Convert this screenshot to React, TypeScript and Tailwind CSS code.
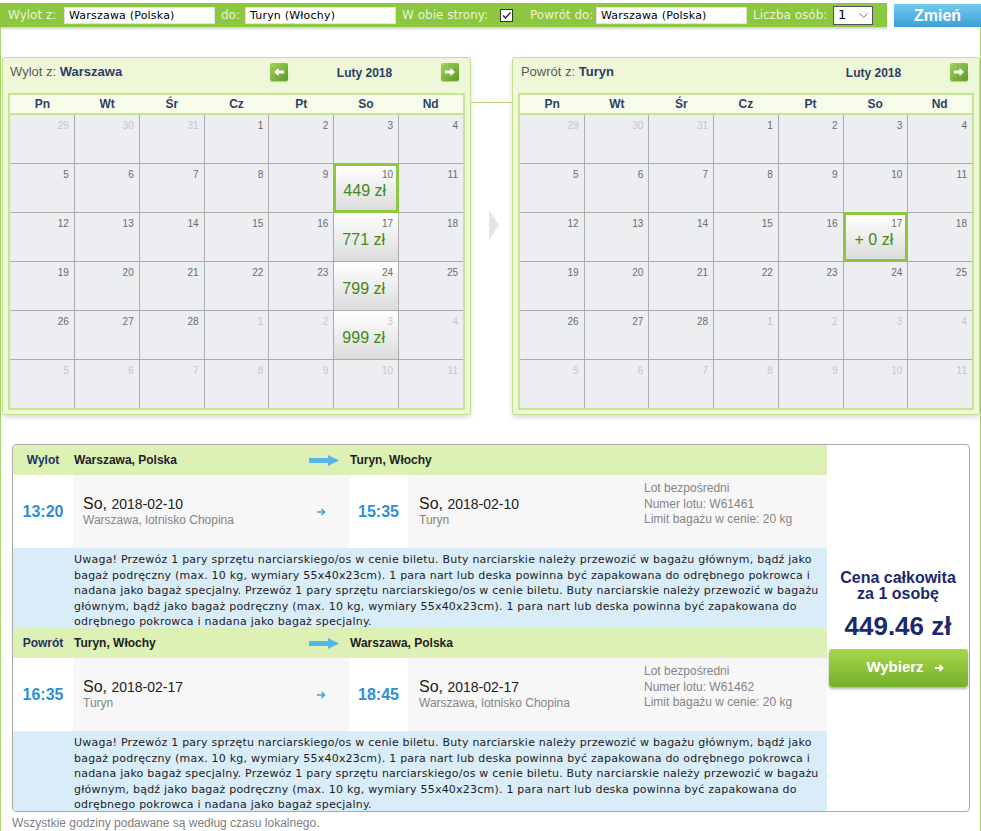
import React from 'react';

type Cell = { d: number; muted?: boolean; price?: string; selected?: boolean };

const DAYS = [ 'Pn', 'Wt', 'Śr', 'Cz', 'Pt', 'So', 'Nd' ];

const NOTE = [
	'Uwaga! Przewóz 1 pary sprzętu narciarskiego/os w cenie biletu. Buty narciarskie należy przewozić w bagażu głównym, bądź jako',
	'bagaż podręczny (max. 10 kg, wymiary 55x40x23cm). 1 para nart lub deska powinna być zapakowana do odrębnego pokrowca i',
	'nadana jako bagaż specjalny. Przewóz 1 pary sprzętu narciarskiego/os w cenie biletu. Buty narciarskie należy przewozić w bagażu',
	'głównym, bądź jako bagaż podręczny (max. 10 kg, wymiary 55x40x23cm). 1 para nart lub deska powinna być zapakowana do',
	'odrębnego pokrowca i nadana jako bagaż specjalny.',
];

// luty 2018: 3 dni ze stycznia, 28 dni, 11 z marca
function buildMonth( prices: Record< number, string >, selected: number ): Cell[] {
	const cells: Cell[] = [];
	[ 29, 30, 31 ].forEach( ( d ) => cells.push( { d, muted: true } ) );
	for ( let d = 1; d <= 28; d++ ) cells.push( { d } );
	for ( let d = 1; d <= 11; d++ ) cells.push( { d, muted: true } );
	return cells.map( ( c, i ) => ( { ...c, price: prices[ i ], selected: i === selected } ) );
}

const leftCells = buildMonth( { 12: '449 zł', 19: '771 zł', 26: '799 zł', 33: '999 zł' }, 12 );
const rightCells = buildMonth( { 19: '+ 0 zł' }, 19 );

function NavButton( { dir }: { dir: 'left' | 'right' } ) {
	return (
		<div className="flex h-[18px] w-[18px] items-center justify-center rounded-[2px] bg-linear-to-br from-[#a4d35a] to-[#5b9a26] shadow-[0_1px_1px_rgba(0,0,0,0.2)]">
			<svg width="10" height="8" viewBox="0 0 10 8">
				<path
					d={
						dir === 'left'
							? 'M0 4 L4.5 0 L4.5 2.5 L10 2.5 L10 5.5 L4.5 5.5 L4.5 8 Z'
							: 'M10 4 L5.5 0 L5.5 2.5 L0 2.5 L0 5.5 L5.5 5.5 L5.5 8 Z'
					}
					fill="white"
				/>
			</svg>
		</div>
	);
}

function DayCell( { cell }: { cell: Cell } ) {
	const numColor = cell.muted ? 'text-[#c4c6c9]' : 'text-[#6b6b6b]';
	if ( ! cell.price ) {
		return (
			<div className="h-[48px] bg-[#eceef1] pr-[5px] pt-[5px] text-right">
				<div className={ `text-[10px] leading-[12px] ${ numColor }` }>{ cell.d }</div>
			</div>
		);
	}
	return (
		<div
			className={
				cell.selected
					? 'relative z-10 h-[48px] border-2 border-[#8dc63f] bg-linear-to-b from-white to-[#dcdcdc] pr-[3px] pt-[3px] ring-1 ring-[#8dc63f]'
					: 'h-[48px] bg-linear-to-b from-white to-[#dcdcdc] pr-[5px] pt-[5px]'
			}
		>
			<div className={ `text-right text-[10px] leading-[12px] ${ numColor }` }>{ cell.d }</div>
			<div className="mt-[1px] text-center text-[16px] leading-[18px] text-[#3f8a1c]">{ cell.price }</div>
		</div>
	);
}

function Calendar( {
	label,
	city,
	cells,
	showPrev,
	titlePad,
}: {
	label: string;
	city: string;
	cells: Cell[];
	showPrev: boolean;
	titlePad: string;
} ) {
	return (
		<div className="h-[358px] w-[469px] rounded-[3px] border border-[#c3e08d] bg-[#eef8d9] px-[5px] shadow-[0_3px_5px_rgba(0,0,0,0.13)]">
			<div className="flex h-[27px] items-center pr-[6px]">
				<div className={ `flex-1 text-[13px] ${ titlePad }` }>
					<span className="text-[#5a5a5a]">{ label } </span>
					<span className="font-bold text-[#2d3c66]">{ city }</span>
				</div>
				{ showPrev ? <NavButton dir="left" /> : <div className="w-[18px]" /> }
				<div className="w-[153px] pt-[3px] text-center text-[12px] font-bold text-[#2d3c66]">Luty 2018</div>
				<NavButton dir="right" />
			</div>
			<div className="mt-[8px] border-2 border-[#c6e491] bg-[#f6fce9]">
				<div className="grid h-[20px] grid-cols-7 items-center border-b-2 border-[#c6e491] text-center text-[12px] font-bold text-[#2f3f66]">
					{ DAYS.map( ( d ) => (
						<div key={ d }>{ d }</div>
					) ) }
				</div>
				<div className="grid grid-cols-7 gap-px bg-[#ababab]">
					{ cells.map( ( c, i ) => (
						<DayCell key={ i } cell={ c } />
					) ) }
				</div>
			</div>
		</div>
	);
}

function Field( { value }: { value: string } ) {
	return (
		<div className="h-[17px] w-[151px] border border-[#e2e2e2] bg-white pl-[4px] text-[11px] leading-[15px] tracking-[0.2px] text-black">
			{ value }
		</div>
	);
}

function TopBar() {
	return (
		<div className="flex h-[27px] pt-[3px]" style={ { fontFamily: '"DejaVu Sans", sans-serif' } }>
			<div className="flex h-[24px] w-[887px] items-center bg-[#8dc63f] text-[12px] text-[#e9f5d6] shadow-[0_2px_2px_rgba(0,0,0,0.18)]">
				<span className="ml-[8px] w-[56px]">Wylot z:</span>
				<Field value="Warszawa (Polska)" />
				<span className="ml-[6px] w-[24px]">do:</span>
				<Field value="Turyn (Włochy)" />
				<span className="ml-[6px] w-[98px]">W obie strony:</span>
				<div className="flex h-[13px] w-[13px] items-center justify-center border border-[#333] bg-white">
					<svg width="11" height="11" viewBox="0 0 11 11">
						<path d="M2 5.5 L4.5 8 L9.5 2.5" stroke="#222" strokeWidth="1.3" fill="none" />
					</svg>
				</div>
				<span className="ml-[17px] w-[66px]">Powrót do:</span>
				<Field value="Warszawa (Polska)" />
				<span className="ml-[6px] w-[80px]">Liczba osób:</span>
				<div className="flex h-[19px] w-[40px] items-center justify-between border border-[#555] bg-white pl-[4px] pr-[4px] text-[13px] text-black">
					<span>1</span>
					<svg width="9" height="5" viewBox="0 0 9 5">
						<path d="M0.5 0.5 L4.5 4.5 L8.5 0.5" stroke="#777" strokeWidth="1" fill="none" />
					</svg>
				</div>
			</div>
			<div
				className="ml-[7px] mt-[1px] flex h-[23px] w-[87px] items-center justify-center bg-linear-to-b from-[#72cbef] to-[#3a9fd5] text-[16px] font-bold text-white"
				style={ { fontFamily: '"Liberation Sans", sans-serif' } }
			>
				Zmień
			</div>
		</div>
	);
}

function BlueArrow() {
	return (
		<svg width="30" height="11" viewBox="0 0 30 11" className="mr-[10px]">
			<path d="M0 3 H19 V0 L30 5.5 L19 11 V8 H0 Z" fill="#55b5ea" />
		</svg>
	);
}

function SmallArrow() {
	return (
		<svg width="9" height="8" viewBox="0 0 9 8" className="mr-[23px]">
			<path d="M0 4 H7.5 M4.5 1 L7.5 4 L4.5 7" stroke="#3ea2dd" strokeWidth="1.6" fill="none" />
		</svg>
	);
}

type FlightProps = {
	label: string;
	from: string;
	to: string;
	dep: string;
	arr: string;
	date: string;
	depPlace: string;
	arrPlace: string;
	flightNo: string;
};

function DateBlock( { date, place }: { date: string; place: string } ) {
	return (
		<div>
			<div className="leading-[18px] text-[#222]">
				<span className="text-[16px]">So,</span> <span className="text-[14px]">{ date }</span>
			</div>
			<div className="text-[12px] leading-[15px] text-[#858585]">{ place }</div>
		</div>
	);
}

function Flight( p: FlightProps ) {
	return (
		<>
			<div className="flex h-[30px] items-center bg-[#ddf1b5] text-[12px] font-bold text-[#1e1e1e]">
				<div className="w-[60px] text-center text-[#1f3262]">{ p.label }</div>
				<div className="flex w-[276px] items-center pl-[1px]">
					<span className="flex-1">{ p.from }</span>
					<BlueArrow />
				</div>
				<div className="pl-[1px]">{ p.to }</div>
			</div>
			<div className="flex h-[73px]">
				<div className="flex w-[60px] items-center justify-center bg-white text-[16px] font-bold text-[#2d8fd5]">
					{ p.dep }
				</div>
				<div className="flex w-[276px] items-center bg-[#f7f7f7] pl-[10px]">
					<div className="flex-1">
						<DateBlock date={ p.date } place={ p.depPlace } />
					</div>
					<SmallArrow />
				</div>
				<div className="flex w-[59px] items-center justify-center bg-white text-[16px] font-bold text-[#2d8fd5]">
					{ p.arr }
				</div>
				<div className="flex flex-1 bg-[#f7f7f7] pl-[11px]">
					<div className="flex w-[225px] items-center">
						<DateBlock date={ p.date } place={ p.arrPlace } />
					</div>
					<div className="pt-[6px] text-[12px] leading-[15.5px] text-[#858585]">
						<div>Lot bezpośredni</div>
						<div>Numer lotu: { p.flightNo }</div>
						<div>Limit bagażu w cenie: 20 kg</div>
					</div>
				</div>
			</div>
			<div
				className="h-[80px] bg-[#d9edf9] pl-[61px] pt-[4px] text-[11px] leading-[15.6px] tracking-[0.22px] text-[#1c1c1c]"
				style={ { fontFamily: '"DejaVu Sans", sans-serif' } }
			>
				{ NOTE.map( ( line ) => (
					<div key={ line } className="whitespace-nowrap">
						{ line }
					</div>
				) ) }
			</div>
		</>
	);
}

export default function App() {
	return (
		<div
			className="flex h-[831px] w-[981px] flex-col overflow-hidden bg-white"
			style={ { fontFamily: '"Liberation Sans", Arial, sans-serif' } }
		>
			<TopBar />
			<div className="flex-1 border-x border-[#a9d36e]">
				<div className="mt-[30px] flex">
					<div className="ml-[1px]">
						<Calendar label="Wylot z:" city="Warszawa" cells={ leftCells } showPrev titlePad="pl-[2px]" />
					</div>
					<div className="w-[41px]">
						<div className="mt-[45px] h-px bg-[#b5d77c]" />
						<svg width="10" height="30" viewBox="0 0 10 30" className="ml-[18px] mt-[107px]">
							<polygon points="0,0 10,15 0,30" fill="#dfe5ea" />
						</svg>
					</div>
					<Calendar label="Powrót z:" city="Turyn" cells={ rightCells } showPrev={ false } titlePad="pl-[3px]" />
				</div>

				<div className="ml-[11px] mt-[29px] flex w-[958px] overflow-hidden rounded-[4px] border border-[#a9a9a9]">
					<div className="w-[814px]">
						<Flight
							label="Wylot"
							from="Warszawa, Polska"
							to="Turyn, Włochy"
							dep="13:20"
							arr="15:35"
							date="2018-02-10"
							depPlace="Warszawa, lotnisko Chopina"
							arrPlace="Turyn"
							flightNo="W61461"
						/>
						<Flight
							label="Powrót"
							from="Turyn, Włochy"
							to="Warszawa, Polska"
							dep="16:35"
							arr="18:45"
							date="2018-02-17"
							depPlace="Turyn"
							arrPlace="Warszawa, lotnisko Chopina"
							flightNo="W61462"
						/>
					</div>
					<div className="flex flex-1 flex-col items-center justify-center text-[#1b2a6b]">
						<div className="text-center text-[16px] font-bold leading-[16px]">
							<div>Cena całkowita</div>
							<div>za 1 osobę</div>
						</div>
						<div className="mt-[9px] text-[26px] font-bold leading-[30px]">449.46 zł</div>
						<div className="ml-[1px] mt-[8px] flex h-[38px] w-[139px] items-center justify-center gap-[11px] rounded-[3px] bg-linear-to-b from-[#a8d64a] to-[#76b02a] pl-[13px] text-[15px] font-bold text-white shadow-[0_2px_3px_rgba(0,0,0,0.3)]">
							<span>Wybierz</span>
							<svg width="9" height="8" viewBox="0 0 9 8">
								<path d="M0 4 H7.5 M4.5 1 L7.5 4 L4.5 7" stroke="white" strokeWidth="1.8" fill="none" />
							</svg>
						</div>
					</div>
				</div>

				<div className="ml-[11px] mt-[4px] text-[12px] leading-[14px] text-[#808080]">
					Wszystkie godziny podawane są według czasu lokalnego.
				</div>
			</div>
		</div>
	);
}
